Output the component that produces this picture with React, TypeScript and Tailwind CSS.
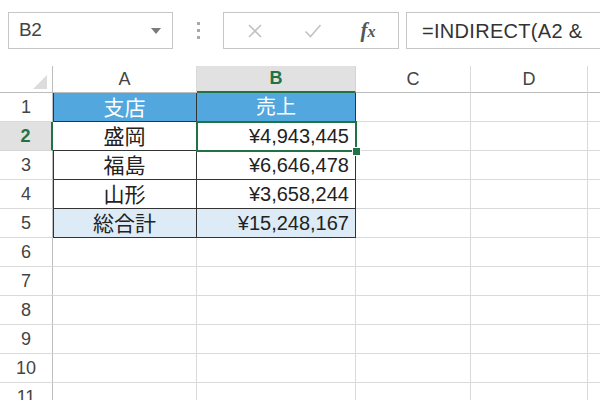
const font = "font-['Liberation_Sans','Noto_Sans_CJK_JP',sans-serif]";

const cols = ["A", "B", "C", "D", ""];

type Row = { a: string; b: string; kind: "head" | "data" | "total" };

const rows: Row[] = [
  { a: "支店", b: "売上", kind: "head" },
  { a: "盛岡", b: "¥4,943,445", kind: "data" },
  { a: "福島", b: "¥6,646,478", kind: "data" },
  { a: "山形", b: "¥3,658,244", kind: "data" },
  { a: "総合計", b: "¥15,248,167", kind: "total" },
];

const Toolbar = () => (
  <div className="h-[66px] flex items-start pt-[12px] bg-white">
    {/* name box */}
    <div className="ml-[8px] w-[165px] h-[37px] border border-[#c6c6c6] flex items-center justify-between pl-[10px] pr-[10px]">
      <span className="text-[19px] text-[#444] tracking-[-0.5px]">B2</span>
      <svg width="12" height="8" viewBox="0 0 12 8">
        <path d="M1 1h10L6 7z" fill="#7a7a7a" />
      </svg>
    </div>
    {/* dots */}
    <div className="w-[50px] h-[37px] flex flex-col items-center justify-center gap-[4px]">
      <div className="w-[3px] h-[3px] bg-[#a8a8a8]" />
      <div className="w-[3px] h-[3px] bg-[#a8a8a8]" />
      <div className="w-[3px] h-[3px] bg-[#a8a8a8]" />
    </div>
    {/* cancel / enter / fx */}
    <div className="w-[176px] h-[37px] border border-[#c6c6c6] flex items-center">
      <div className="w-[62px] flex justify-center">
        <svg width="16" height="16" viewBox="0 0 16 16">
          <path d="M2 2l12 12M14 2L2 14" stroke="#c2c2c2" strokeWidth="1.6" fill="none" />
        </svg>
      </div>
      <div className="w-[54px] flex justify-center">
        <svg width="18" height="16" viewBox="0 0 18 16">
          <path d="M1.5 8.5l5 5L16.5 2" stroke="#c2c2c2" strokeWidth="1.6" fill="none" />
        </svg>
      </div>
      <div className="w-[56px] flex justify-center">
        <span className="font-['Liberation_Serif',serif] italic font-bold text-[21px] text-[#555] leading-none">
          f<span className="text-[16px]">x</span>
        </span>
      </div>
    </div>
    {/* formula box */}
    <div className="ml-[7px] flex-1 h-[37px] border border-r-0 border-[#c6c6c6] flex items-center pl-[15px] overflow-hidden whitespace-nowrap">
      <span className="text-[20px] text-[#333] tracking-[0.3px]">=INDIRECT(A2 &amp;</span>
    </div>
  </div>
);

const App = () => {
  return (
    <div className={`w-[600px] h-[400px] overflow-hidden bg-white ${font}`}>
      <Toolbar />
      <div className="grid grid-cols-[53px_144px_159px_115px_117px_117px] w-[705px]">
        {/* header row */}
        <div className="h-[27px] border-r border-b border-[#bdbdbd] flex items-end justify-end pr-[5px] pb-[3px]">
          <svg width="14" height="14" viewBox="0 0 14 14">
            <path d="M14 0V14H0z" fill="#dcdcdc" />
          </svg>
        </div>
        {cols.map((c, idx) => (
          <div
            key={idx}
            className={
              c === "B"
                ? "h-[27px] bg-[#e1e1e1] border-r border-[#d4d4d4] border-b-2 border-b-[#217346] flex items-center justify-center text-[18px] font-bold text-[#217346]"
                : "h-[27px] border-r border-[#dadada] border-b border-b-[#bdbdbd] flex items-center justify-center text-[18px] text-[#444]"
            }
          >
            {c}
          </div>
        ))}

        {Array.from({ length: 11 }).map((_, i) => {
          const n = i + 1;
          const r = rows[i];
          const active = n === 2;
          const aCls = r
            ? r.kind === "head"
              ? "bg-[#52a8de] text-white border-[#333]"
              : r.kind === "total"
              ? "bg-[#ddebf7] text-[#222] border-[#333]"
              : "bg-white text-[#222] border-[#333]"
            : "border-[#dadada]";
          return (
            <div key={n} className="contents">
              <div
                className={
                  active
                    ? "h-[29px] bg-[#e1e1e1] border-b border-[#d4d4d4] border-r-2 border-r-[#217346] flex items-center justify-center text-[18px] font-bold text-[#217346]"
                    : "h-[29px] border-r border-[#bdbdbd] border-b border-b-[#dadada] flex items-center justify-center text-[18px] text-[#444]"
                }
              >
                {n}
              </div>
              <div
                className={`h-[29px] border-r border-b ${aCls} flex items-center justify-center text-[21px] leading-none ${
                  r && !active ? "shadow-[inset_1px_0_0_#333]" : ""
                }`}
              >
                {r?.a}
              </div>
              <div
                className={`relative h-[29px] border-r border-b ${aCls} flex items-center ${
                  r?.kind === "head" ? "justify-center" : "justify-end pr-[6px]"
                } text-[20px] leading-none ${active ? "z-10" : ""}`}
              >
                {r?.b}
                {active && (
                  <>
                    <div className="absolute left-[-1px] top-[-1px] right-[-2px] bottom-[-2px] border-2 border-[#217346]" />
                    <div className="absolute right-[-6px] bottom-[-6px] w-[9px] h-[9px] bg-[#217346] border border-white" />
                  </>
                )}
              </div>
              <div className="h-[29px] border-r border-b border-[#dadada]" />
              <div className="h-[29px] border-r border-b border-[#dadada]" />
              <div className="h-[29px] border-b border-[#dadada]" />
            </div>
          );
        })}
      </div>
    </div>
  );
};

export default App;
